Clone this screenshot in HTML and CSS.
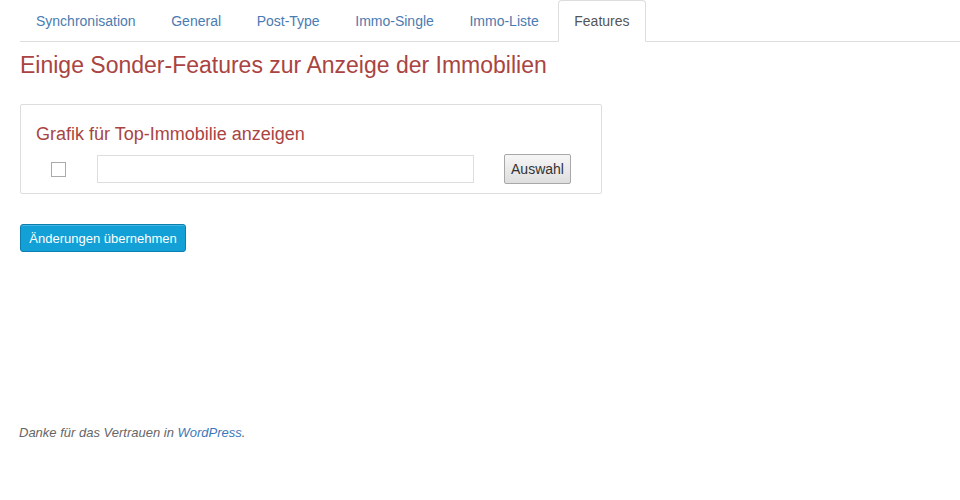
FILE: index.html
```html
<!DOCTYPE html>
<html lang="de">
<head>
<meta charset="utf-8">
<title>Features</title>
<link rel="stylesheet" href="styles.css">
</head>
<body>
<div class="wrap">
  <ul class="tabs">
    <li><a href="#">Synchronisation</a></li>
    <li><a href="#">General</a></li>
    <li><a href="#">Post-Type</a></li>
    <li><a href="#">Immo-Single</a></li>
    <li><a href="#">Immo-Liste</a></li>
    <li class="active"><a href="#">Features</a></li>
  </ul>
  <h2 class="title">Einige Sonder-Features zur Anzeige der Immobilien</h2>
  <div class="panel">
    <h3 class="panel-title">Grafik für Top-Immobilie anzeigen</h3>
    <div class="row">
      <span class="check-cell"><span class="checkbox"></span></span>
      <span class="input"></span>
      <button class="btn-select" type="button">Auswahl</button>
    </div>
  </div>
  <button class="btn-primary" type="button">Änderungen übernehmen</button>
  <p class="footer">Danke für das Vertrauen in <a href="#">WordPress</a>.</p>
</div>
</body>
</html>
```
FILE: styles.css
```css
html, body {
  margin: 0;
  padding: 0;
  background: #fff;
  font-family: "Liberation Sans", Arial, sans-serif;
}
.wrap {
  width: 960px;
  height: 500px;
  overflow: hidden;
}
.tabs {
  list-style: none;
  margin: 0 0 0 20px;
  padding: 0;
  display: flex;
  border-bottom: 1px solid #ddd;
}
.tabs li {
  margin: 0 3.6px -1px 0;
}
.tabs a {
  display: block;
  padding: 10px 15px;
  line-height: 20px;
  font-size: 14px;
  color: #4a7bb1;
  text-decoration: none;
  border: 1px solid transparent;
  border-radius: 4px 4px 0 0;
}
.tabs .active a {
  color: #555;
  border-color: #ddd #ddd transparent;
  background: #fff;
}
.title {
  margin: 10px 0 0 20px;
  font-size: 23px;
  font-weight: normal;
  line-height: 26px;
  color: #a94442;
}
.panel {
  margin: 26px 0 0 20px;
  width: 582px;
  height: 90px;
  border: 1px solid #ddd;
  border-radius: 2px;
  box-sizing: border-box;
  padding: 18px 15px 0 15px;
}
.panel-title {
  margin: 0;
  font-size: 18px;
  font-weight: normal;
  line-height: 22px;
  color: #a94442;
}
.row {
  display: flex;
  align-items: center;
  margin-top: 9px;
}
.check-cell {
  width: 61px;
  display: flex;
  justify-content: flex-start;
  padding-left: 15px;
  box-sizing: border-box;
}
.checkbox {
  width: 13px;
  height: 13px;
  border: 1px solid #aaa;
  background: #fff;
}
.input {
  width: 377px;
  height: 28px;
  box-sizing: border-box;
  border: 1px solid #ddd;
  background: #fff;
}
.btn-select {
  margin-left: 30px;
  width: 67px;
  height: 30px;
  font-family: "Liberation Sans", Arial, sans-serif;
  font-size: 14px;
  color: #333;
  border: 1px solid #a8a8a8;
  border-radius: 2px;
  background: linear-gradient(#f6f6f6, #dedede);
  padding: 0;
}
.btn-primary {
  display: block;
  margin: 30px 0 0 20px;
  width: 166px;
  height: 28px;
  padding: 0;
  font-family: "Liberation Sans", Arial, sans-serif;
  font-size: 13px;
  color: #fff;
  background: #12a0d6;
  border: 1px solid #0a7fb0;
  border-radius: 3px;
  box-shadow: inset 0 1px 0 rgba(120, 200, 230, 0.5);
}
.footer {
  margin: 173px 0 0 19px;
  font-size: 13px;
  font-style: italic;
  color: #666;
}
.footer a {
  color: #3b78b8;
  text-decoration: none;
}
```
